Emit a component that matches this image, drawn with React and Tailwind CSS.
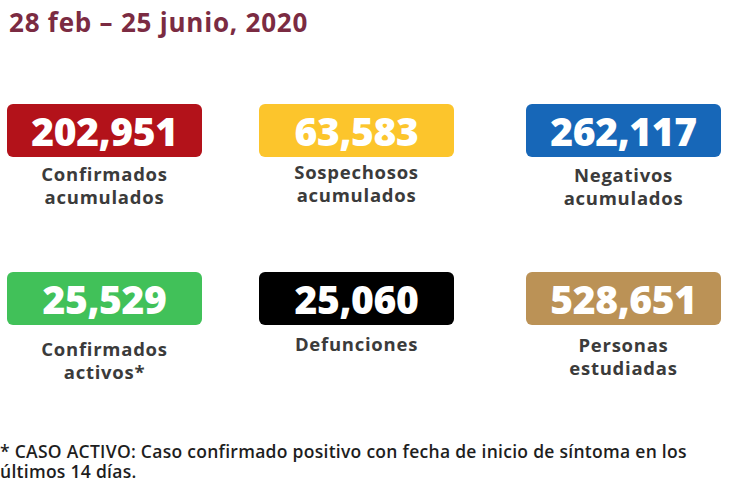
import React from "react";

const rowOne = [
  { value: "202,951", lines: ["Confirmados", "acumulados"], bg: "bg-[#b3121a]", gap: "mt-[5px]" },
  { value: "63,583", lines: ["Sospechosos", "acumulados"], bg: "bg-[#fcc52c]", gap: "mt-[3px]" },
  { value: "262,117", lines: ["Negativos", "acumulados"], bg: "bg-[#1767b8]", gap: "mt-[6px]" },
];

const rowTwo = [
  { value: "25,529", lines: ["Confirmados", "activos*"], bg: "bg-[#41c159]", gap: "mt-[12px]" },
  { value: "25,060", lines: ["Defunciones"], bg: "bg-black", gap: "mt-[7px]" },
  { value: "528,651", lines: ["Personas", "estudiadas"], bg: "bg-[#bb9256]", gap: "mt-[8px]" },
];

const StatCard = ({ value, lines, bg, gap, className = "" }) => (
  <div className={`w-[195px] flex flex-col items-center ${className}`}>
    <div
      className={`w-full h-[53px] rounded-[6px] flex items-center justify-center ${bg}`}
    >
      <span className="text-white font-extrabold text-[39px] leading-none tracking-[-0.01em]">
        {value}
      </span>
    </div>
    <div className={`${gap} text-center text-[#3b3b3b] font-bold text-[18.5px] leading-[23px] tracking-[0.04em]`}>
      {lines.map((l) => (
        <div key={l}>{l}</div>
      ))}
    </div>
  </div>
);

const StatRow = ({ items, className = "" }) => (
  <div className={`flex pl-[7px] ${className}`}>
    <StatCard {...items[0]} />
    <StatCard {...items[1]} className="ml-[57px]" />
    <StatCard {...items[2]} className="ml-[72px]" />
  </div>
);

export default function App() {
  return (
    <div
      className="w-[730px] h-[485px] bg-white overflow-hidden relative"
      style={{ fontFamily: '"Open Sans", "Liberation Sans", sans-serif' }}
    >
      {/* Date range */}
      <h1 className="pl-[9px] pt-[6px] text-[26px] leading-[32px] font-bold tracking-[0.03em] text-[#7b2b42]">
        28 feb – 25 junio, 2020
      </h1>

      {/* Stats */}
      <div className="mt-[66px]">
        <StatRow items={rowOne} />
      </div>
      <div className="absolute left-0 top-[272px]">
        <StatRow items={rowTwo} />
      </div>

      {/* Footnote */}
      <p className="absolute left-0 top-[441px] w-[730px] text-[17.5px] leading-[20px] font-semibold tracking-[0.016em] text-[#1e1e1e]">
        * CASO ACTIVO: Caso confirmado positivo con fecha de inicio de síntoma en los
        <br />
        últimos 14 días.
      </p>
    </div>
  );
}
